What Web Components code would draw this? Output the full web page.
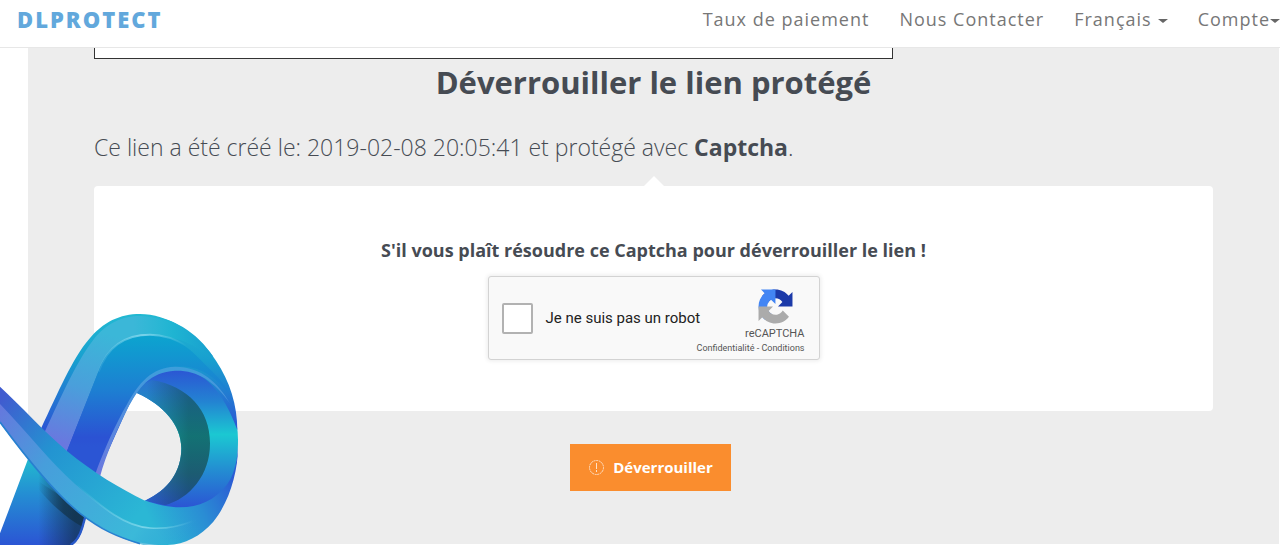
<!DOCTYPE html>
<html lang="fr">
<head>
<meta charset="utf-8">
<meta name="viewport" content="width=device-width, initial-scale=1">
<title>DLProtect</title>
<style>
	html, body {
		height: 100%;
	}

	body {
		margin: 0;
		background: #fff;
		color: #464b53;
		font-family: "Open Sans", "Liberation Sans", sans-serif;
		overflow: hidden;
	}
</style>
</head>
<body>
<protect-page>
	<site-header slot="header">
		<a slot="brand" href="#">DLPROTECT</a>
		<nav-item>Taux de paiement</nav-item>
		<nav-item>Nous Contacter</nav-item>
		<nav-item menu="spaced">Français</nav-item>
		<nav-item menu>Compte</nav-item>
	</site-header>
	<ad-frame></ad-frame>
	<link-info>
		<span slot="title">Déverrouiller le lien protégé</span>
		Ce lien a été créé le: 2019-02-08 20:05:41 et protégé avec <b>Captcha</b>.
	</link-info>
	<captcha-panel>
		<span slot="label">S'il vous plaît résoudre ce Captcha pour déverrouiller le lien !</span>
		<robot-check></robot-check>
	</captcha-panel>
	<unlock-button>Déverrouiller</unlock-button>
	<ribbon-logo slot="mascot"></ribbon-logo>
</protect-page>

<script>
class ProtectPage extends HTMLElement {
	constructor() {
		super();
		this.attachShadow({mode: 'open'});
		this.shadowRoot.innerHTML = `
			<style>
				:host {
					display: flex;
					flex-direction: column;
					min-height: 100%;
					position: relative;
				}

				main {
					flex: 1;
					box-sizing: border-box;
					margin: 0 1px 1px 28px;
					padding: 0 66px 20px;
					background: #ededed;
				}
			</style>
			<slot name="header"></slot>
			<main><slot></slot></main>
			<slot name="mascot"></slot>
		`;
	}
}

class SiteHeader extends HTMLElement {
	constructor() {
		super();
		this.attachShadow({mode: 'open'});
		this.shadowRoot.innerHTML = `
			<style>
				:host {
					display: block;
					background: #fff;
					border-bottom: 1px solid #e7e7e7;
				}

				header {
					display: flex;
					justify-content: space-between;
					align-items: center;
					height: 47px;
					padding: 0 0 10px 17px;
					box-sizing: border-box;
				}

				::slotted([slot="brand"]) {
					color: #62a8dc;
					font-size: 22px;
					font-weight: 800;
					letter-spacing: 2px;
					text-decoration: none;
				}

				nav {
					display: flex;
					gap: 30px;
				}
			</style>
			<header>
				<slot name="brand"></slot>
				<nav><slot></slot></nav>
			</header>
		`;
	}
}

class NavItem extends HTMLElement {
	constructor() {
		super();
		this.attachShadow({mode: 'open'});
		this.shadowRoot.innerHTML = `
			<style>
				:host {
					display: block;
				}

				a {
					display: flex;
					align-items: center;
					color: #777;
					font-size: 18px;
					line-height: 24px;
					letter-spacing: 1px;
					text-decoration: none;
					white-space: nowrap;
				}

				i {
					display: none;
					margin-top: 4px;
					border: 5px solid transparent;
					border-top: 4px solid #666;
					border-bottom: 0;
				}

				:host([menu]) i {
					display: block;
				}

				:host([menu="spaced"]) i {
					margin-left: 6px;
				}
			</style>
			<a href="#"><slot></slot><i></i></a>
		`;
	}
}

class AdFrame extends HTMLElement {
	constructor() {
		super();
		this.attachShadow({mode: 'open'});
		this.shadowRoot.innerHTML = `
			<style>
				:host {
					display: block;
					max-width: 797px;
					height: 10px;
					background: #fff;
					border: 1px solid #333;
					border-top: 0;
				}
			</style>
		`;
	}
}

class LinkInfo extends HTMLElement {
	constructor() {
		super();
		this.attachShadow({mode: 'open'});
		this.shadowRoot.innerHTML = `
			<style>
				:host {
					display: block;
				}

				h1 {
					margin: 0 0 24px;
					font-size: 31px;
					font-weight: 700;
					line-height: 46px;
					text-align: center;
				}

				p {
					margin: 0 0 21px;
					font-size: 23px;
					font-weight: 300;
					line-height: 36px;
				}

				::slotted(b) {
					font-weight: 700;
				}
			</style>
			<h1><slot name="title"></slot></h1>
			<p><slot></slot></p>
		`;
	}
}

class CaptchaPanel extends HTMLElement {
	constructor() {
		super();
		this.attachShadow({mode: 'open'});
		this.shadowRoot.innerHTML = `
			<style>
				:host {
					display: flex;
					flex-direction: column;
					align-items: center;
					position: relative;
					gap: 14px;
					padding: 52px 20px 51px;
					background: #fff;
					border-radius: 4px;
				}

				:host::before {
					content: "";
					position: absolute;
					bottom: 100%;
					left: 50%;
					margin-left: -10px;
					border: 10px solid transparent;
					border-top: 0;
					border-bottom-color: #fff;
				}

				h2 {
					margin: 0;
					font-size: 18px;
					font-weight: 700;
					line-height: 24px;
				}
			</style>
			<h2><slot name="label"></slot></h2>
			<slot></slot>
		`;
	}
}

class RobotCheck extends HTMLElement {
	constructor() {
		super();
		this.attachShadow({mode: 'open'});
		this.shadowRoot.innerHTML = `
			<style>
				:host {
					display: flex;
					justify-content: space-between;
					box-sizing: border-box;
					width: 332px;
					padding: 12px 14px 4px 13px;
					background: #f9f9f9;
					border: 1px solid #d3d3d3;
					border-radius: 3px;
					box-shadow: 0 0 4px 1px rgba(0, 0, 0, .08);
					color: #222;
					font-family: Roboto, "Liberation Sans", sans-serif;
				}

				label {
					display: flex;
					align-items: center;
					gap: 13px;
					padding-bottom: 8px;
					font-size: 15px;
					line-height: 20px;
					white-space: nowrap;
				}

				input {
					appearance: none;
					box-sizing: border-box;
					width: 31px;
					height: 31px;
					margin: 0;
					background: #fff;
					border: 2px solid #b2b2b2;
					border-radius: 2px;
				}

				/* narrower than the terms line, which may run left under the label */
				.brand {
					display: flex;
					flex-direction: column;
					align-items: flex-end;
					width: 80px;
					color: #555;
					white-space: nowrap;
				}

				svg {
					width: 35px;
					height: 35px;
					margin-right: 12px;
				}

				.name {
					margin-top: 3px;
					font-size: 11px;
					line-height: 14px;
				}

				.terms {
					font-size: 9px;
					line-height: 14px;
				}

				.terms a {
					color: inherit;
					text-decoration: none;
				}
			</style>
			<label><input type="checkbox">Je ne suis pas un robot</label>
			<div class="brand">
				<svg viewBox="-1 -1 66 66" aria-hidden="true">
					<path fill="#1c3aa9" d="M64 32V4.700l-7.200 7.100C51 4.700 42 0 32 0 21.600 0 12.400 5 6.600 12.700l11.700 11.900c1.200-2.100 2.800-4 4.800-5.300 2-1.600 4.900-2.900 8.900-2.900 5.500.2 10.300 3 13 7.200L36.700 32z"/>
					<path fill="#4285f4" d="M32 0H4.600l7.200 7.300C4.600 13.100 0 22 0 32c0 10.400 5 19.700 12.600 25.500l11.900-11.700c-2.100-1.200-4-2.800-5.300-4.800-1.600-2-2.900-4.900-2.900-9 .2-5.400 3-10.200 7.200-12.900l8.400 8.300z"/>
					<path fill="#ababab" d="M0 32v27.300l7.200-7.100C13 59.300 22 64 32 64c10.400 0 19.600-5 25.400-12.700L45.700 39.400c-1.200 2.200-2.800 4-4.800 5.400-2 1.600-4.900 2.900-8.900 2.900-5.500-.2-10.300-3-13-7.300l8.300-8.400z"/>
				</svg>
				<div class="name">reCAPTCHA</div>
				<div class="terms"><a href="#">Confidentialité</a> - <a href="#">Conditions</a></div>
			</div>
		`;
	}
}

class UnlockButton extends HTMLElement {
	constructor() {
		super();
		this.attachShadow({mode: 'open', delegatesFocus: true});
		this.shadowRoot.innerHTML = `
			<style>
				:host {
					display: flex;
					justify-content: center;
					margin-top: 33px;
					padding-right: 6px;
				}

				button {
					display: flex;
					align-items: center;
					gap: 8px;
					padding: 11px 18px 12px;
					border: 0;
					background: #fa8d2e;
					color: #fff;
					font: 700 15px/24px "Open Sans", "Liberation Sans", sans-serif;
					cursor: pointer;
				}

				svg {
					width: 17px;
					height: 17px;
					fill: none;
					stroke: #fff;
					opacity: .75;
				}
			</style>
			<button type="button">
				<svg viewBox="0 0 17 17" aria-hidden="true">
					<circle cx="8.500" cy="8.500" r="7" stroke-dasharray="2 .7"/>
					<path d="M8.500 4v6M8.500 11v2"/>
				</svg>
				<slot></slot>
			</button>
		`;
	}
}

class RibbonLogo extends HTMLElement {
	constructor() {
		super();
		this.attachShadow({mode: 'open'});
		this.shadowRoot.innerHTML = `
			<style>
				:host {
					display: block;
					position: absolute;
					left: 0;
					bottom: 0;
					width: 260px;
					pointer-events: none;
				}

				svg {
					display: block;
					width: 100%;
				}
			</style>
			<svg viewBox="0 0 780 735" aria-hidden="true">
				<defs>
					<linearGradient id="ring" gradientUnits="userSpaceOnUse" x1="0" y1="210" x2="0" y2="622">
						<stop offset="0" stop-color="#2b56d4"/>
						<stop offset=".23" stop-color="#2383d2"/>
						<stop offset=".47" stop-color="#1bc8d2"/>
						<stop offset=".72" stop-color="#238fd2"/>
						<stop offset="1" stop-color="#2b55d4"/>
					</linearGradient>
					<linearGradient id="inner" gradientUnits="userSpaceOnUse" x1="0" y1="240" x2="0" y2="615">
						<stop offset="0" stop-color="#2a73d3"/>
						<stop offset=".45" stop-color="#16a7ab"/>
						<stop offset=".75" stop-color="#287ba8"/>
						<stop offset="1" stop-color="#2b58d2"/>
					</linearGradient>
					<linearGradient id="innerShade" gradientUnits="userSpaceOnUse" x1="440" y1="0" x2="565" y2="0">
						<stop offset="0" stop-color="#132f3a" stop-opacity="0"/>
						<stop offset="1" stop-color="#103c3c" stop-opacity=".5"/>
					</linearGradient>
					<linearGradient id="front" gradientUnits="userSpaceOnUse" x1="0" y1="100" x2="0" y2="440">
						<stop offset="0" stop-color="#0ba6cf"/>
						<stop offset=".5" stop-color="#1d7fd2"/>
						<stop offset=".92" stop-color="#2b52d3"/>
						<stop offset="1" stop-color="#2b55d4"/>
					</linearGradient>
					<linearGradient id="frontLight" gradientUnits="userSpaceOnUse" x1="280" y1="90" x2="190" y2="430">
						<stop offset="0" stop-color="#3bb7d8"/>
						<stop offset=".5" stop-color="#4a9fdb"/>
						<stop offset="1" stop-color="#6978df"/>
					</linearGradient>
					<linearGradient id="crest" gradientUnits="userSpaceOnUse" x1="400" y1="0" x2="640" y2="0">
						<stop offset="0" stop-color="#22b9d2" stop-opacity="0"/>
						<stop offset=".5" stop-color="#1fb4d2"/>
						<stop offset="1" stop-color="#189fcf"/>
					</linearGradient>
					<linearGradient id="outer" gradientUnits="userSpaceOnUse" x1="0" y1="42" x2="0" y2="390">
						<stop offset="0" stop-color="#22b9d2"/>
						<stop offset=".4" stop-color="#189fcf"/>
						<stop offset="1" stop-color="#2c55d4"/>
					</linearGradient>
					<linearGradient id="edge" gradientUnits="userSpaceOnUse" x1="0" y1="200" x2="0" y2="520">
						<stop offset="0" stop-color="#3d9edb"/>
						<stop offset="1" stop-color="#6c79df"/>
					</linearGradient>
					<linearGradient id="leg" gradientUnits="userSpaceOnUse" x1="70" y1="480" x2="70" y2="735">
						<stop offset="0" stop-color="#22b9cf"/>
						<stop offset=".4" stop-color="#248ed3"/>
						<stop offset="1" stop-color="#2b55d4"/>
					</linearGradient>
					<linearGradient id="legShade" gradientUnits="userSpaceOnUse" x1="115" y1="0" x2="225" y2="0">
						<stop offset="0" stop-color="#102b40" stop-opacity="0"/>
						<stop offset="1" stop-color="#102b40" stop-opacity=".65"/>
					</linearGradient>
					<linearGradient id="crossShade" gradientUnits="userSpaceOnUse" x1="115" y1="0" x2="190" y2="0">
						<stop offset="0" stop-color="#112f43" stop-opacity="0"/>
						<stop offset="1" stop-color="#112f43" stop-opacity=".65"/>
					</linearGradient>
					<linearGradient id="cross" gradientUnits="userSpaceOnUse" x1="0" y1="300" x2="400" y2="660">
						<stop offset="0" stop-color="#405bcf"/>
						<stop offset=".4" stop-color="#2394d1"/>
						<stop offset="1" stop-color="#2bb7d5"/>
					</linearGradient>
					<linearGradient id="crossEnd" gradientUnits="userSpaceOnUse" x1="440" y1="640" x2="690" y2="520">
						<stop offset="0" stop-color="#2bb7d5"/>
						<stop offset=".55" stop-color="#2a8dd4"/>
						<stop offset="1" stop-color="#2b5cd4"/>
					</linearGradient>
					<linearGradient id="crossLight" gradientUnits="userSpaceOnUse" x1="0" y1="330" x2="560" y2="710">
						<stop offset="0" stop-color="#6479dd"/>
						<stop offset=".3" stop-color="#479edb"/>
						<stop offset=".8" stop-color="#3bb9d9"/>
						<stop offset="1" stop-color="#3b9fd9" stop-opacity="0"/>
					</linearGradient>
					<linearGradient id="glow" gradientUnits="userSpaceOnUse" x1="295" y1="0" x2="560" y2="0">
						<stop offset="0" stop-color="#8fdcf0" stop-opacity=".1"/>
						<stop offset=".5" stop-color="#8fdcf0" stop-opacity=".8"/>
						<stop offset="1" stop-color="#8fdcf0" stop-opacity="0"/>
					</linearGradient>
					<linearGradient id="lowGlow" gradientUnits="userSpaceOnUse" x1="225" y1="0" x2="580" y2="0">
						<stop offset="0" stop-color="#8bdcee" stop-opacity="0"/>
						<stop offset=".6" stop-color="#8bdcee" stop-opacity=".8"/>
						<stop offset="1" stop-color="#8bdcee" stop-opacity="0"/>
					</linearGradient>
				</defs>
				<!-- back of the loop, open in the middle -->
				<path fill="url(#ring)" d="M412 280L400 270C450 190 590 190 650 250C695 300 714 355 714 420C714 500 700 590 610 640L500 640L435 602C505 570 544 515 544 445C544 375 490 315 412 280Z"/>
				<path fill="url(#inner)" d="M412 280L400 268L455 240C565 258 630 330 630 430C630 525 570 595 495 616L435 602C505 570 544 515 544 445C544 375 490 315 412 280Z"/>
				<path fill="url(#innerShade)" d="M412 280L400 268L455 240C565 258 630 330 630 430C630 525 570 595 495 616L435 602C505 570 544 515 544 445C544 375 490 315 412 280Z"/>
				<!-- leg below the crossing -->
				<path fill="url(#leg)" d="M85 475L260 640L249 680C242 708 228 727 216 735H0V700Z"/>
				<path fill="url(#legShade)" d="M110 540L260 640L249 680C242 708 228 727 216 735H115Z"/>
				<path fill="url(#crossShade)" d="M110 500L260 640L249 682C200 655 150 610 110 560Z"/>
				<path fill="none" stroke="#2859c9" stroke-width="7" d="M256 650L247 682C238 712 226 727 212 735"/>
				<!-- front strip and its lit side -->
				<path fill="url(#outer)" d="M122 388C175 275 220 172 265 120C310 65 360 42 420 42C500 42 590 95 648 182C690 245 712 315 712 390C670 275 610 205 525 207C455 205 415 260 380 330L290 530L200 455Z"/>
				<path fill="url(#frontLight)" d="M133 398C190 275 230 185 278 122C320 67 370 48 420 48C510 50 582 98 620 160C570 120 510 104 450 104C365 104 320 150 295 215L200 455Z"/>
				<path fill="url(#crest)" d="M400 46C510 40 590 95 640 170L620 165C570 120 510 104 400 104Z"/>
				<path fill="url(#front)" d="M200 455L295 215C320 145 370 104 450 104C520 106 565 140 600 178C635 215 665 235 690 285C625 205 575 198 525 200C455 202 415 250 380 315C350 365 310 455 286 522Z"/>
				<path fill="url(#edge)" d="M286 522C310 455 350 365 380 315C415 250 455 202 525 200C605 200 655 250 690 310C640 240 590 210 525 212C450 216 416 262 382 328C350 390 318 465 300 530Z"/>
				<path fill="none" stroke="url(#glow)" stroke-width="6" d="M296 215C320 145 370 104 450 104C490 104 525 116 560 138"/>
				<!-- strip that crosses over -->
				<path fill="url(#cross)" d="M0 260C60 315 130 393 200 452C280 518 360 565 435 602L480 735C390 733 310 690 240 640C165 580 80 475 0 368Z"/>
				<path fill="url(#crossEnd)" d="M434 601C540 640 625 625 680 555C700 528 711 490 714 440C714 520 685 610 640 665C595 715 545 738 480 735C450 730 425 690 434 601Z"/>
				<path fill="url(#crossLight)" d="M0 312C80 395 150 485 225 552C300 618 375 680 450 685C495 690 535 682 620 645C580 705 530 735 480 735H430C345 715 285 670 240 640C165 580 80 475 0 368Z"/>
				<path fill="none" stroke="url(#lowGlow)" stroke-width="5" d="M232 556C310 625 375 680 450 684C490 687 530 683 580 662"/>
				<path fill="none" stroke="#2880d0" stroke-width="5" d="M0 366C80 475 165 580 240 640C305 690 350 710 420 731"/>
			</svg>
		`;
	}
}

customElements.define('protect-page', ProtectPage);
customElements.define('site-header', SiteHeader);
customElements.define('nav-item', NavItem);
customElements.define('ad-frame', AdFrame);
customElements.define('link-info', LinkInfo);
customElements.define('captcha-panel', CaptchaPanel);
customElements.define('robot-check', RobotCheck);
customElements.define('unlock-button', UnlockButton);
customElements.define('ribbon-logo', RibbonLogo);
</script>
</body>
</html>
